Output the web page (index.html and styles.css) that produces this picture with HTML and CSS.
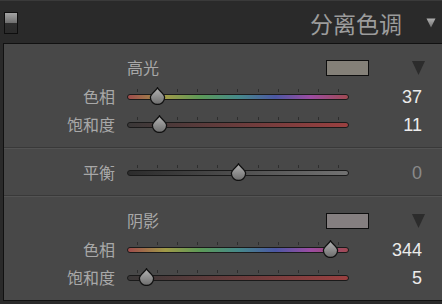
FILE: index.html
```html
<!DOCTYPE html>
<html>
<head>
    <title>分离色调</title>
    <link rel="stylesheet" href="styles.css">
</head>
<body>
    <div class="header">
        <div class="toggle"></div>
        <div class="title">分离色调</div>
        <svg class="caret" width="10" height="10" viewBox="0 0 10 10">
            <defs>
                <linearGradient id="cg" x1="0" y1="0" x2="0" y2="1">
                    <stop offset="0" stop-color="#b0b0b0"/>
                    <stop offset="1" stop-color="#707070"/>
                </linearGradient>
            </defs>
            <polygon points="0.5,0.5 9.5,0.5 5,9.5" fill="url(#cg)"/>
        </svg>
    </div>

    <div class="panel">
        <!-- Highlights -->
        <div class="section">
            <div class="head">
                <span class="head-label">高光</span>
                <span class="swatch hi"></span>
                <svg class="arrow" width="13" height="14" viewBox="0 0 13 14"><polygon points="0,0 13,0 6.5,14" fill="#2c2c2c"/></svg>
            </div>
            <div class="row">
                <span class="label">色相</span>
                <div class="slider">
                    <div class="ticks"><i></i><i></i><i></i><i></i><i></i><i></i><i></i><i></i><i></i><i></i><i></i></div>
                    <div class="track hue"></div>
                    <svg class="thumb" style="left: 22px" width="17" height="18" viewBox="0 0 17 18"><use href="#drop"/></svg>
                </div>
                <span class="value">37</span>
            </div>
            <div class="row">
                <span class="label">饱和度</span>
                <div class="slider">
                    <div class="ticks"><i></i><i></i><i></i><i></i><i></i><i></i><i></i><i></i><i></i><i></i><i></i></div>
                    <div class="track sat"></div>
                    <svg class="thumb" style="left: 24px" width="17" height="18" viewBox="0 0 17 18"><use href="#drop"/></svg>
                </div>
                <span class="value">11</span>
            </div>
        </div>

        <!-- Balance -->
        <div class="section mid">
            <div class="row">
                <span class="label">平衡</span>
                <div class="slider">
                    <div class="ticks"><i></i><i></i><i></i><i></i><i></i><i></i><i></i><i></i><i></i><i></i><i></i></div>
                    <div class="track bal"></div>
                    <svg class="thumb" style="left: 103px" width="17" height="18" viewBox="0 0 17 18"><use href="#drop"/></svg>
                </div>
                <span class="value dim">0</span>
            </div>
        </div>

        <!-- Shadows -->
        <div class="section last">
            <div class="head">
                <span class="head-label">阴影</span>
                <span class="swatch lo"></span>
                <svg class="arrow" width="13" height="14" viewBox="0 0 13 14"><polygon points="0,0 13,0 6.5,14" fill="#2c2c2c"/></svg>
            </div>
            <div class="row">
                <span class="label">色相</span>
                <div class="slider">
                    <div class="ticks"><i></i><i></i><i></i><i></i><i></i><i></i><i></i><i></i><i></i><i></i><i></i></div>
                    <div class="track hue"></div>
                    <svg class="thumb" style="left: 195px" width="17" height="18" viewBox="0 0 17 18"><use href="#drop"/></svg>
                </div>
                <span class="value">344</span>
            </div>
            <div class="row">
                <span class="label">饱和度</span>
                <div class="slider">
                    <div class="ticks"><i></i><i></i><i></i><i></i><i></i><i></i><i></i><i></i><i></i><i></i><i></i></div>
                    <div class="track sat"></div>
                    <svg class="thumb" style="left: 11px" width="17" height="18" viewBox="0 0 17 18"><use href="#drop"/></svg>
                </div>
                <span class="value">5</span>
            </div>
        </div>
    </div>

    <!-- shared slider thumb shape -->
    <svg width="0" height="0" class="defs">
        <defs>
            <linearGradient id="tg" x1="0" y1="0" x2="0" y2="1">
                <stop offset="0" stop-color="#b4b4b4"/>
                <stop offset="1" stop-color="#6c6c6c"/>
            </linearGradient>
            <path id="drop" d="M8.5 0.8 C9.4 3.4 15.6 6.6 15.6 10.4 A7.1 7.1 0 0 1 1.4 10.4 C1.4 6.6 7.6 3.4 8.5 0.8 Z" fill="url(#tg)" stroke="#111" stroke-width="1.3"/>
        </defs>
    </svg>
</body>
</html>
```

FILE: styles.css
```css
body {
    margin: 0;
    padding: 0;
    background-color: #2a2a2a;
    font-family: "Noto Sans CJK SC", "Liberation Sans", sans-serif;
    overflow: hidden;
}
.defs {
    position: absolute;
}
.header {
    border-top: 1px solid #3a3a3a;
    display: flex;
    align-items: center;
    padding: 0 6px 0 4px;
    box-sizing: border-box;
    height: 43px;
}
.toggle {
    width: 12px;
    height: 20px;
    border: 1px solid #0e0e0e;
    background: linear-gradient(#a4a4a4, #6e6e6e 50%, #2e2e2e 52%, #2a2a2a);
    margin-top: 1px;
}
.title {
    margin-left: auto;
    color: #9c9c9c;
    font-size: 23px;
    line-height: 1;
    margin-top: 3px;
}
.caret {
    margin-left: 24px;
    margin-top: 2px;
}
.panel {
    margin-left: 3px;
    background-color: #484848;
    border: 1px solid #111;
    border-right: none;
}
.section {
    padding: 12px 0 9px;
    border-bottom: 1px solid #393939;
}
.section.mid {
    padding: 9px 0 9px;
    border-top: 1px solid #535353;
}
.section.last {
    border-top: 1px solid #535353;
    border-bottom: none;
}
.head {
    height: 22px;
    margin-bottom: 4px;
    display: flex;
    align-items: center;
    padding-left: 123px;
    padding-right: 17px;
}
.head-label {
    color: #a8a8a8;
    font-size: 16px;
    line-height: 1;
}
.swatch {
    margin-left: auto;
    width: 41px;
    height: 14px;
    border: 1px solid #0e0e0e;
    margin-top: 2px;
}
.swatch.hi {
    background-color: #848078;
}
.swatch.lo {
    background-color: #857f80;
}
.arrow {
    margin-left: 43px;
    margin-top: 1px;
}
.row {
    height: 28px;
    display: grid;
    grid-template-columns: 111px 222px 1fr;
    column-gap: 12px;
    align-items: center;
}
.label {
    text-align: right;
    color: #a8a8a8;
    font-size: 16px;
    line-height: 1;
}
.value {
    text-align: right;
    padding-right: 20px;
    color: #ececec;
    font-family: "Liberation Sans", sans-serif;
    font-size: 18px;
    line-height: 1;
    margin-top: 1px;
}
.value.dim {
    color: #8a8a8a;
}
.slider {
    position: relative;
    height: 28px;
    padding-top: 7px;
    box-sizing: border-box;
}
.ticks {
    display: flex;
    justify-content: space-between;
    padding: 0 10px;
    height: 3px;
    margin-bottom: 2px;
}
.ticks i {
    width: 1px;
    background-color: #2e2e2e;
}
.track {
    height: 4px;
    border: 1px solid #1a1a1a;
    border-radius: 3px;
}
.track.hue {
    background: linear-gradient(to right, #a04c4c, #a09a48 17%, #5c9a58 33%, #468a8a 50%, #4c58a4 67%, #9c4ca2 83%, #a04a52);
}
.track.sat {
    background: linear-gradient(to right, #3a3838, #9a4040);
}
.track.bal {
    background: linear-gradient(to right, #2c2c2c, #727272);
}
.thumb {
    position: absolute;
    top: 5px;
}
```
